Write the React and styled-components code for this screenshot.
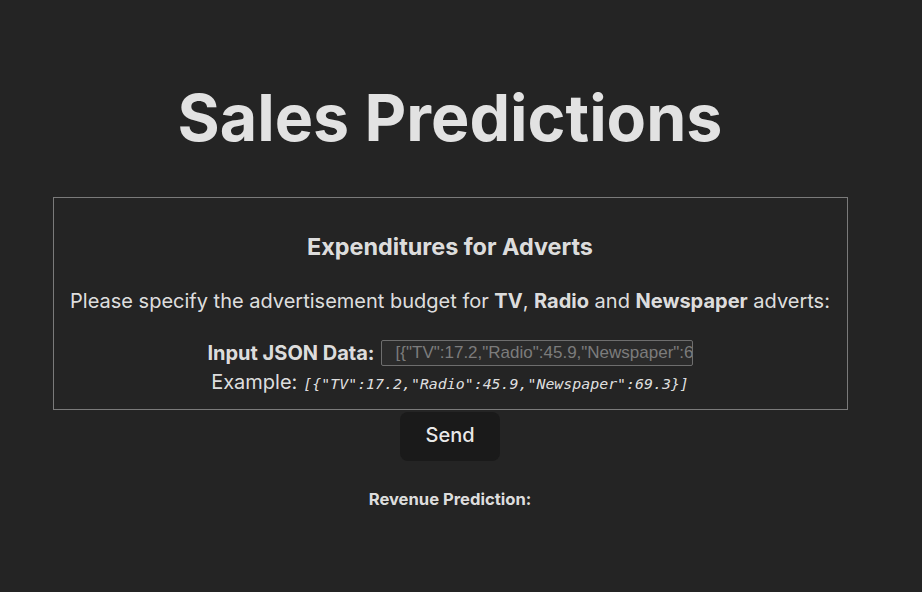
import React, { useState } from "react";
import styled, { createGlobalStyle } from "styled-components";

const Global = createGlobalStyle`
	html, body {
		margin: 0;
		padding: 0;
		background: #242424;
	}
	body {
		font-family: Inter, "Noto Sans", sans-serif;
		color: rgba(255, 255, 255, 0.87);
	}
`;

const Page = styled.div`
	width: 900px;
	padding-top: 80px;
	display: flex;
	flex-direction: column;
	align-items: center;
	text-align: center;
`;

const Title = styled.h1`
	margin: 0 0 41px 0;
	font-size: 64.5px;
	font-weight: 700;
	line-height: 76px;
`;

const Card = styled.div`
	width: 793px;
	border: 1px solid #7a7a7a;
	padding: 36px 0 12px;
	display: flex;
	flex-direction: column;
	align-items: center;
`;

const CardTitle = styled.h3`
	margin: 0 0 28px;
	font-size: 23.4px;
	font-weight: 700;
	line-height: 26px;
`;

const Lead = styled.p`
	margin: 0 0 26px;
	font-size: 20px;
	line-height: 26px;
	b { font-weight: 700; }
`;

const Row = styled.div`
	display: flex;
	align-items: center;
	gap: 6px;
	font-size: 20px;
	line-height: 26px;
`;

const Label = styled.label`
	font-weight: 700;
`;

const JsonInput = styled.input`
	width: 296px;
	height: 24px;
	padding: 0 0 0 14px;
	margin: 0;
	border: 1px solid #6e6e6e;
	border-radius: 2px;
	background: #2b2b2b;
	color: #ddd;
	font-family: "Liberation Sans", Arial, sans-serif;
	font-size: 17px;
	&::placeholder { color: #7c7c7c; }
	&:focus { outline: none; }
`;

const Example = styled.div`
	margin-top: 3px;
	font-size: 20px;
	line-height: 26px;
	display: flex;
	align-items: baseline;
	gap: 6px;
`;

const Code = styled.code`
	font-family: "DejaVu Sans Mono", monospace;
	font-style: italic;
	font-size: 14.9px;
`;

const SendButton = styled.button`
	margin-top: 2px;
	width: 100px;
	height: 49px;
	padding: 0 0 3px;
	border: 1px solid transparent;
	border-radius: 8px;
	background: #1a1a1a;
	color: rgba(255, 255, 255, 0.92);
	font-family: Inter, sans-serif;
	font-size: 20px;
	font-weight: 500;
	cursor: pointer;
`;

const Result = styled.div`
	margin-top: 28px;
	font-size: 16.6px;
	font-weight: 700;
`;

export default function App() {
	const [json, setJson] = useState("");
	return (
		<Page>
			<Global />
			<Title>Sales Predictions</Title>
			<Card>
				<CardTitle>Expenditures for Adverts</CardTitle>
				<Lead>
					Please specify the advertisement budget for <b>TV</b>, <b>Radio</b> and <b>Newspaper</b> adverts:
				</Lead>
				<Row>
					<Label>Input JSON Data:</Label>
					<JsonInput
						value={json}
						onChange={(e) => setJson(e.target.value)}
						placeholder='[{"TV":17.2,"Radio":45.9,"Newspaper":69.3}]'
					/>
				</Row>
				<Example>
					Example: <Code>{'[{"TV":17.2,"Radio":45.9,"Newspaper":69.3}]'}</Code>
				</Example>
			</Card>
			<SendButton>Send</SendButton>
			<Result>Revenue Prediction:</Result>
		</Page>
	);
}
